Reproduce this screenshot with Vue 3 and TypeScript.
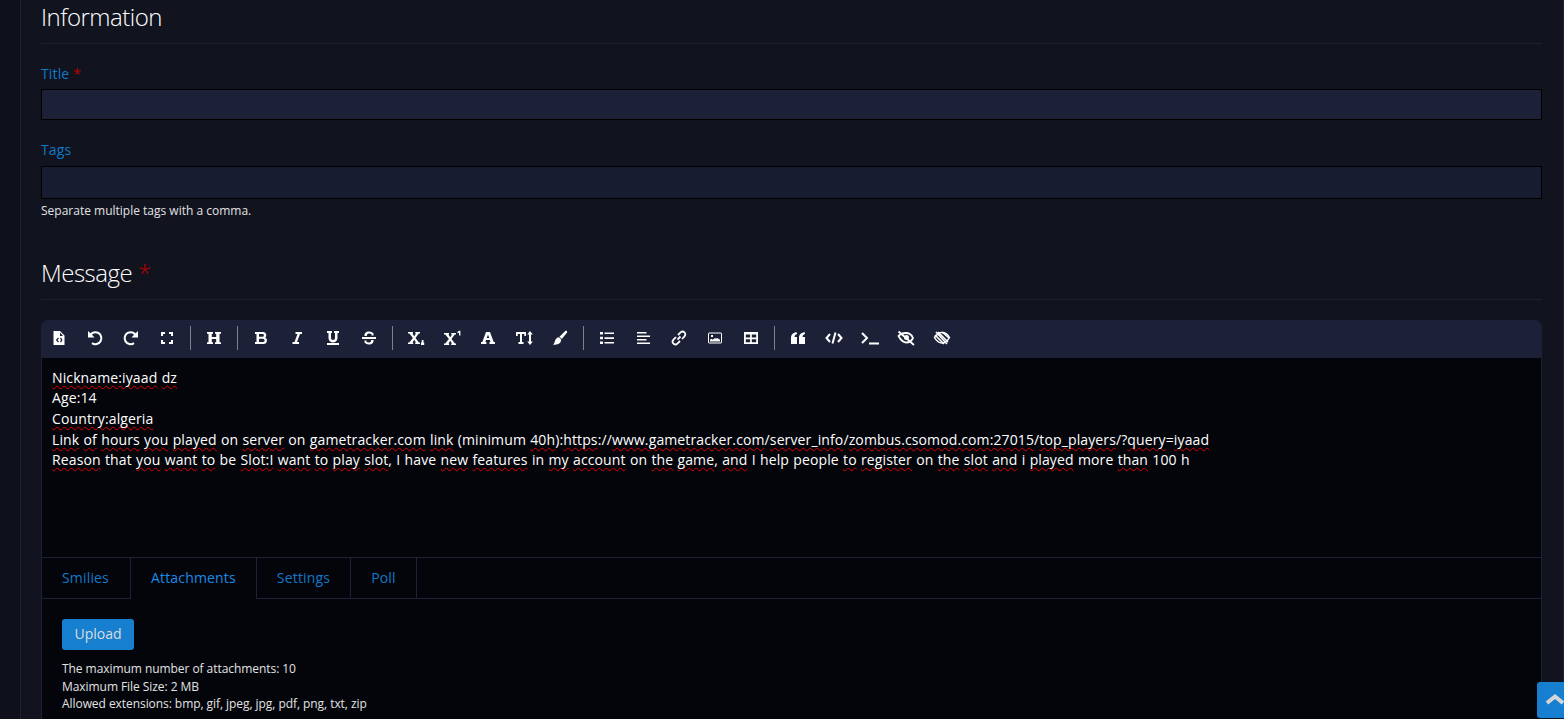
<script setup lang="ts">
type Part = [string, boolean]
const w = (s: string): Part => [s, true]
const p = (s: string): Part => [s, false]
const lines: Part[][] = [
  [w('Nickname:iyaad'), p(' '), w('dz')],
  [p('Age:14')],
  [w('Country:algeria')],
  [w('Link'), p(' '), w('of'), p(' '), w('hours'), p(' '), w('you'), p(' '), w('played'), p(' on '), w('server'), p(' on '), w('gametracker.com'), p(' '), w('link'), p(' (minimum '), w('40h'), p('):'), w('https'), p('://'), w('www.gametracker.com'), p('/'), w('server_info'), p('/'), w('zombus.csomod.com:27015'), p('/'), w('top_players'), p('/?'), w('query'), p('='), w('iyaad')],
  [w('Reason'), p(' that '), w('you'), p(' '), w('want'), p(' '), w('to'), p(' be '), w('Slot:I'), p(' '), w('want'), p(' '), w('to'), p(' '), w('play'), p(' '), w('slot'), p(', I have '), w('new'), p(' '), w('features'), p(' in '), w('my'), p(' '), w('account'), p(' on '), w('the'), p(' '), w('game'), p(', '), w('and'), p(' I help people '), w('to'), p(' '), w('register'), p(' on '), w('the'), p(' '), w('slot'), p(' '), w('and'), p(' i '), w('played'), p(' more '), w('than'), p(' 100 h')],
]
const tabs = ['Smilies', 'Attachments', 'Settings', 'Poll']
</script>

<template>
  <div class="page">
    <div class="rail"></div>
    <main class="content">
      <h2 class="head info">Information</h2>
      <label class="label title">Title <span class="req">*</span></label>
      <div class="input first"></div>
      <label class="label tags">Tags</label>
      <div class="input second"></div>
      <p class="help">Separate multiple tags with a comma.</p>
      <h2 class="head msg">Message <span class="req">*</span></h2>
      <section class="editor">
        <div class="toolbar">
          <svg viewBox="0 0 16 16" class="ic"><path fill="#fff" fill-rule="evenodd" d="M2.500 1h6.500l4.500 4.500V15h-11zM9 2.500V6h3zM7 7.500 4.800 10 7 12.500l1-.8L6.500 10 8 8.300zM10 7.500 9 8.300l1 1.700-1 1.700 1 .8 1.500-2.500z"/></svg>
          <svg viewBox="0 0 16 16" class="ic"><path fill="none" stroke="#fff" stroke-width="2" d="M3 5.500A6 6 0 1 1 5 13.200"/><path fill="#fff" d="M1 1v6.500h6.500l-3-3.200z"/></svg>
          <svg viewBox="0 0 16 16" class="ic"><path fill="none" stroke="#fff" stroke-width="2" d="M13 5.500A6 6 0 1 0 11 13.200"/><path fill="#fff" d="M15 1v6.500H8.500l3-3.200z"/></svg>
          <svg viewBox="0 0 16 16" class="ic"><path fill="none" stroke="#fff" stroke-width="2" d="M3 6V3h3M10 3h3v3M13 10v3h-3M6 13H3v-3"/></svg>
          <i class="sep"></i>
          <svg viewBox="0 0 16 16" class="ic"><path fill="#fff" d="M1 2h6v1.700H5.800V7h4.400V3.700H9V2h6v1.700h-1.500v8.600H15V14H9v-1.700h1.200V9H5.800v3.300H7V14H1v-1.700h1.500V3.700H1z"/></svg>
          <i class="sep"></i>
          <svg viewBox="0 0 16 16" class="ic"><path fill="#fff" fill-rule="evenodd" d="M2 2h8a3.200 3.200 0 0 1 2.300 5.500A3.500 3.500 0 0 1 10.500 14H2v-2h1.500V4H2zm4 2v2.800h3.500a1.400 1.400 0 0 0 0-2.800zm0 4.800V12h4a1.600 1.600 0 0 0 0-3.200z"/></svg>
          <svg viewBox="0 0 16 16" class="ic"><path fill="#fff" d="M6.500 2H13v2h-2l-3 8h2v2H3.500v-2h2l3-8h-2z"/></svg>
          <svg viewBox="0 0 16 16" class="ic"><path fill="#fff" d="M2 1h5v2H6v5a2 2 0 0 0 4 0V3H9V1h5v2h-1.500v5a4.500 4.500 0 0 1-9 0V3H2zM2 13h12v2H2z"/></svg>
          <svg viewBox="0 0 16 16" class="ic"><path fill="#fff" d="M1 7h14v2H1zM3.500 6C3 3.500 5 1.500 8 1.500c2 0 3.500.7 4.500 2v2H10.500V4C9.900 3.700 9 3.500 8 3.500c-1.500 0-2.500 1-2 2.500zM12.500 10c.5 2.500-1.500 4.500-4.500 4.500-2 0-3.500-.7-4.500-2v-2h2v1.500c.6.300 1.500.5 2.500.5 1.500 0 2.500-1 2-2.500z"/></svg>
          <i class="sep"></i>
          <svg viewBox="0 0 18 16" class="ic wide"><path fill="#fff" d="M1 2h5v1.500h-.6L7.200 6.200 9 3.500h-.7V2H13v1.500h-1.200L8.500 8l3.400 4.500H13V14H8.200v-1.500H9L7.200 9.800 5.500 12.500h.7V14H1v-1.500h1.200L5.900 8 2.300 3.500H1zM14 12.500h.7V10H16.500v2.500h.7V15H14z"/></svg>
          <svg viewBox="0 0 18 16" class="ic wide"><path fill="#fff" d="M1 3h5v1.500h-.6L7.200 7.200 9 4.500h-.7V3H13v1.500h-1.200L8.500 9l3.400 4.500H13V15H8.200v-1.500H9L7.200 10.800 5.500 13.500h.7V15H1v-1.500h1.200L5.900 9 2.300 4.500H1zM14.200 2l2-1.200h1.200v4.700H16V2.700l-1.200.6z"/></svg>
          <svg viewBox="0 0 16 16" class="ic"><path fill="#fff" fill-rule="evenodd" d="M6 2h4l3.700 10H15v2H9.500v-2h1l-.6-2H6l-.6 2h1v2H1v-2h1.300zm2 2.800L6.700 8h2.600z"/></svg>
          <svg viewBox="0 0 18 16" class="ic wide"><path fill="#fff" d="M1 2h10v4H9.300V4H7v8h1.500v2h-5v-2H5V4H2.700v2H1zM15 1l2.800 3.500H16v7h1.800L15 15l-2.800-3.500H14v-7h-1.800z"/></svg>
          <svg viewBox="0 0 16 16" class="ic"><path fill="#fff" d="M14.800 1c.6.500.5 1.300.1 1.800L9.800 9 7.400 6.700 13 1.200c.5-.5 1.300-.6 1.800-.2zM6.900 7.300l2.300 2.300C9.300 13 6 15.500 1 14.600c1.500-1 1.400-2.500 2.200-4.200.7-1.800 2-3 3.700-3.100z"/></svg>
          <i class="sep"></i>
          <svg viewBox="0 0 16 16" class="ic"><path fill="#fff" d="M1 2h3v2.500H1zM1 6.800h3v2.500H1zM1 11.500h3V14H1zM5.500 2.400H15v1.700H5.500zM5.500 7.200H15v1.700H5.500zM5.500 11.900H15v1.700H5.500z"/></svg>
          <svg viewBox="0 0 16 16" class="ic"><path fill="#fff" d="M2 2h9.500v1.500H2zM2 5.500h13V7H2zM2 9h9.500v1.500H2zM2 12.500h13V14H2z"/></svg>
          <svg viewBox="0 0 16 16" class="ic"><path fill="none" stroke="#fff" stroke-width="1.800" d="M6.500 9.500 9.500 6.500M7 5l2.600-2.600a2.600 2.600 0 0 1 3.900 3.900L11 9M9 11l-2.600 2.600a2.600 2.600 0 0 1-3.900-3.900L5 7"/></svg>
          <svg viewBox="0 0 16 16" class="ic"><rect x="1.500" y="3" width="13" height="10" rx=".5" fill="none" stroke="#fff"/><path fill="#fff" d="M3 11.500V9.700l1.500-1 1.200 1 2.300-1.700 1 .8 1.200-.8 2.800 1.700v1.800zM4 5h2v2H4z"/></svg>
          <svg viewBox="0 0 16 16" class="ic"><path fill="#fff" fill-rule="evenodd" d="M1 2h14v12H1zM2.800 4.500v3h4.300v-3zm6 0v3h4.400v-3zm-6 4.700v3h4.300v-3zm6 0v3h4.400v-3z"/></svg>
          <i class="sep"></i>
          <svg viewBox="0 0 16 16" class="ic"><path fill="#fff" d="M1 8c0-3 1.500-5 5.500-6l.5 2C5.500 4.500 4.800 5.200 4.500 7H7v7H1zM9 8c0-3 1.500-5 5.500-6l.5 2c-1.500.5-2.200 1.200-2.500 3H15v7H9z"/></svg>
          <svg viewBox="0 0 18 16" class="ic wide"><path fill="none" stroke="#fff" stroke-width="2" d="M5 4 1.500 8 5 12M13 4l3.500 4-3.500 4M10.500 2.500l-3 11"/></svg>
          <svg viewBox="0 0 20 16" class="ic xwide"><path fill="none" stroke="#fff" stroke-width="2" d="m2 3 5 5-5 5M9 13.500h10"/></svg>
          <svg viewBox="0 0 18 16" class="ic wide"><path fill="none" stroke="#fff" stroke-width="1.800" d="M1.500 6C3.500 3.500 6 3 9 3s5.500 1.500 7 5c-1.500 3-3.500 4.500-6.500 4.500S4 10.500 1.500 6zM1.500 1.500 17 15"/><circle cx="9.500" cy="7.500" r="2.500" fill="#fff"/></svg>
          <svg viewBox="0 0 18 16" class="ic wide"><path fill="none" stroke="#fff" stroke-width="1.500" d="M1.500 7.500C4 4 6 2.500 9 2.500s5.500 1.500 7.500 5C14.500 11 12 13 9 13s-5.500-2-7.500-5.500z"/><path fill="none" stroke="#fff" stroke-width="1.600" d="M3 2l11 12M5 2l10 10M2 5l9 9M9 2l7 6"/></svg>
        </div>
        <div class="text">
          <div v-for="(line, i) in lines" :key="i" class="line"><span v-for="(part, j) in line" :key="j" :class="{ wavy: part[1] }">{{ part[0] }}</span></div>
        </div>
        <nav class="tabs">
          <a v-for="t in tabs" :key="t" class="tab" :class="{ active: t === 'Attachments' }">{{ t }}</a>
        </nav>
        <div class="pane">
          <button class="upload" type="button">Upload</button>
          <div class="limits">
            <div>The maximum number of attachments: 10</div>
            <div>Maximum File Size: 2 MB</div>
            <div>Allowed extensions: bmp, gif, jpeg, jpg, pdf, png, txt, zip</div>
          </div>
        </div>
      </section>
    </main>
    <aside class="rail-right"></aside>
    <a class="top"><svg viewBox="0 0 27 36" width="27" height="36"><path fill="none" stroke="#d6d6d6" stroke-width="4" d="M10 21l8-6.500 8 6.500"/></svg></a>
  </div>
</template>

<style>
html, body { margin: 0; background: #0e111c; overflow: hidden; }
</style>

<style scoped>
.page { position: relative; display: flex; height: 719px; overflow: hidden; font-family: "Open Sans", sans-serif; background: #0e111c; }
.rail { width: 20px; border-right: 1px solid #1c2139; flex: none; }
.content { width: 1542px; flex: none; box-sizing: border-box; padding: 0 21px 0 20px; background: #11141f; }
.rail-right { flex: 1; background: #11141f; border-left: 1px solid #1c2139; }
.head { margin: 0; color: #fff; font-weight: 300; font-size: 24px; line-height: 33px; letter-spacing: -.5px; border-bottom: 1px solid #1c2033; }
.info { height: 43px; line-height: 34px; }
.msg { margin-top: 38px; height: 43px; }
.req { color: #b80000; }
.label { display: block; color: #1279c9; font-size: 14px; line-height: 19px; letter-spacing: .15px; }
.title { margin-top: 20px; }
.tags { margin-top: 20px; }
.input { background: #1c2138; border: 1px solid #000; box-sizing: border-box; }
.first { height: 31px; margin-top: 6px; }
.second { height: 33px; margin-top: 7px; background: #181c30; }
.help { margin: 4px 0 0; color: #e2e2e2; font-size: 12px; line-height: 15px; }
.editor { margin-top: 20px; background: #04050b; border: 1px solid #1c2138; border-radius: 6px 6px 0 0; height: 500px; }
.toolbar { height: 37px; background: #1c2138; display: flex; align-items: center; padding: 0 0 3px 9px; box-sizing: border-box; border-radius: 5px 5px 0 0; }
.ic { width: 16px; height: 16px; margin: 0 10px; flex: none; }
.ic:first-child { margin-left: 0; }
.ic.wide { width: 18px; margin: 0 9px; }
.ic.xwide { width: 20px; margin: 0 8px; }
.sep { width: 1px; height: 24px; background: #7f828e; flex: none; margin: 0 5px; }
.text { height: 199px; box-sizing: border-box; padding: 9.500px 10px; color: #fff; font-size: 14px; line-height: 20.7px; letter-spacing: .12px; word-spacing: .5px; }
.line { white-space: pre; }
.wavy { text-decoration: underline wavy #e00000 1px; text-underline-offset: 2px; text-decoration-skip-ink: none; }
.tabs { display: flex; height: 42px; box-sizing: border-box; border-top: 1px solid #1c2138; border-bottom: 1px solid #1c2138; }
.tab { padding: 0 20px; line-height: 40px; font-size: 14px; letter-spacing: .17px; color: #1279c9; border-right: 1px solid #1c2138; }
.tab.active { color: #1a8be6; height: 41px; background: #04050b; }
.tab:first-child { width: 89px; padding: 0 0 0 20px; box-sizing: border-box; }
.pane { padding: 20px; }
.upload { display: block; height: 31px; width: 72px; background: #167fcf; border: 0; border-radius: 3px; color: #dcdcdc; font: 14px/27px "Open Sans", sans-serif; padding: 0 0 3px; }
.limits { margin-top: 10px; color: #e2e2e2; font-size: 12px; line-height: 17.500px; letter-spacing: -.06px; }
.top { position: absolute; right: 0; bottom: 1px; width: 27px; height: 36px; background: #167fcf; border-radius: 3px 0 0 3px; overflow: hidden; }
.top svg { display: block; }
</style>
